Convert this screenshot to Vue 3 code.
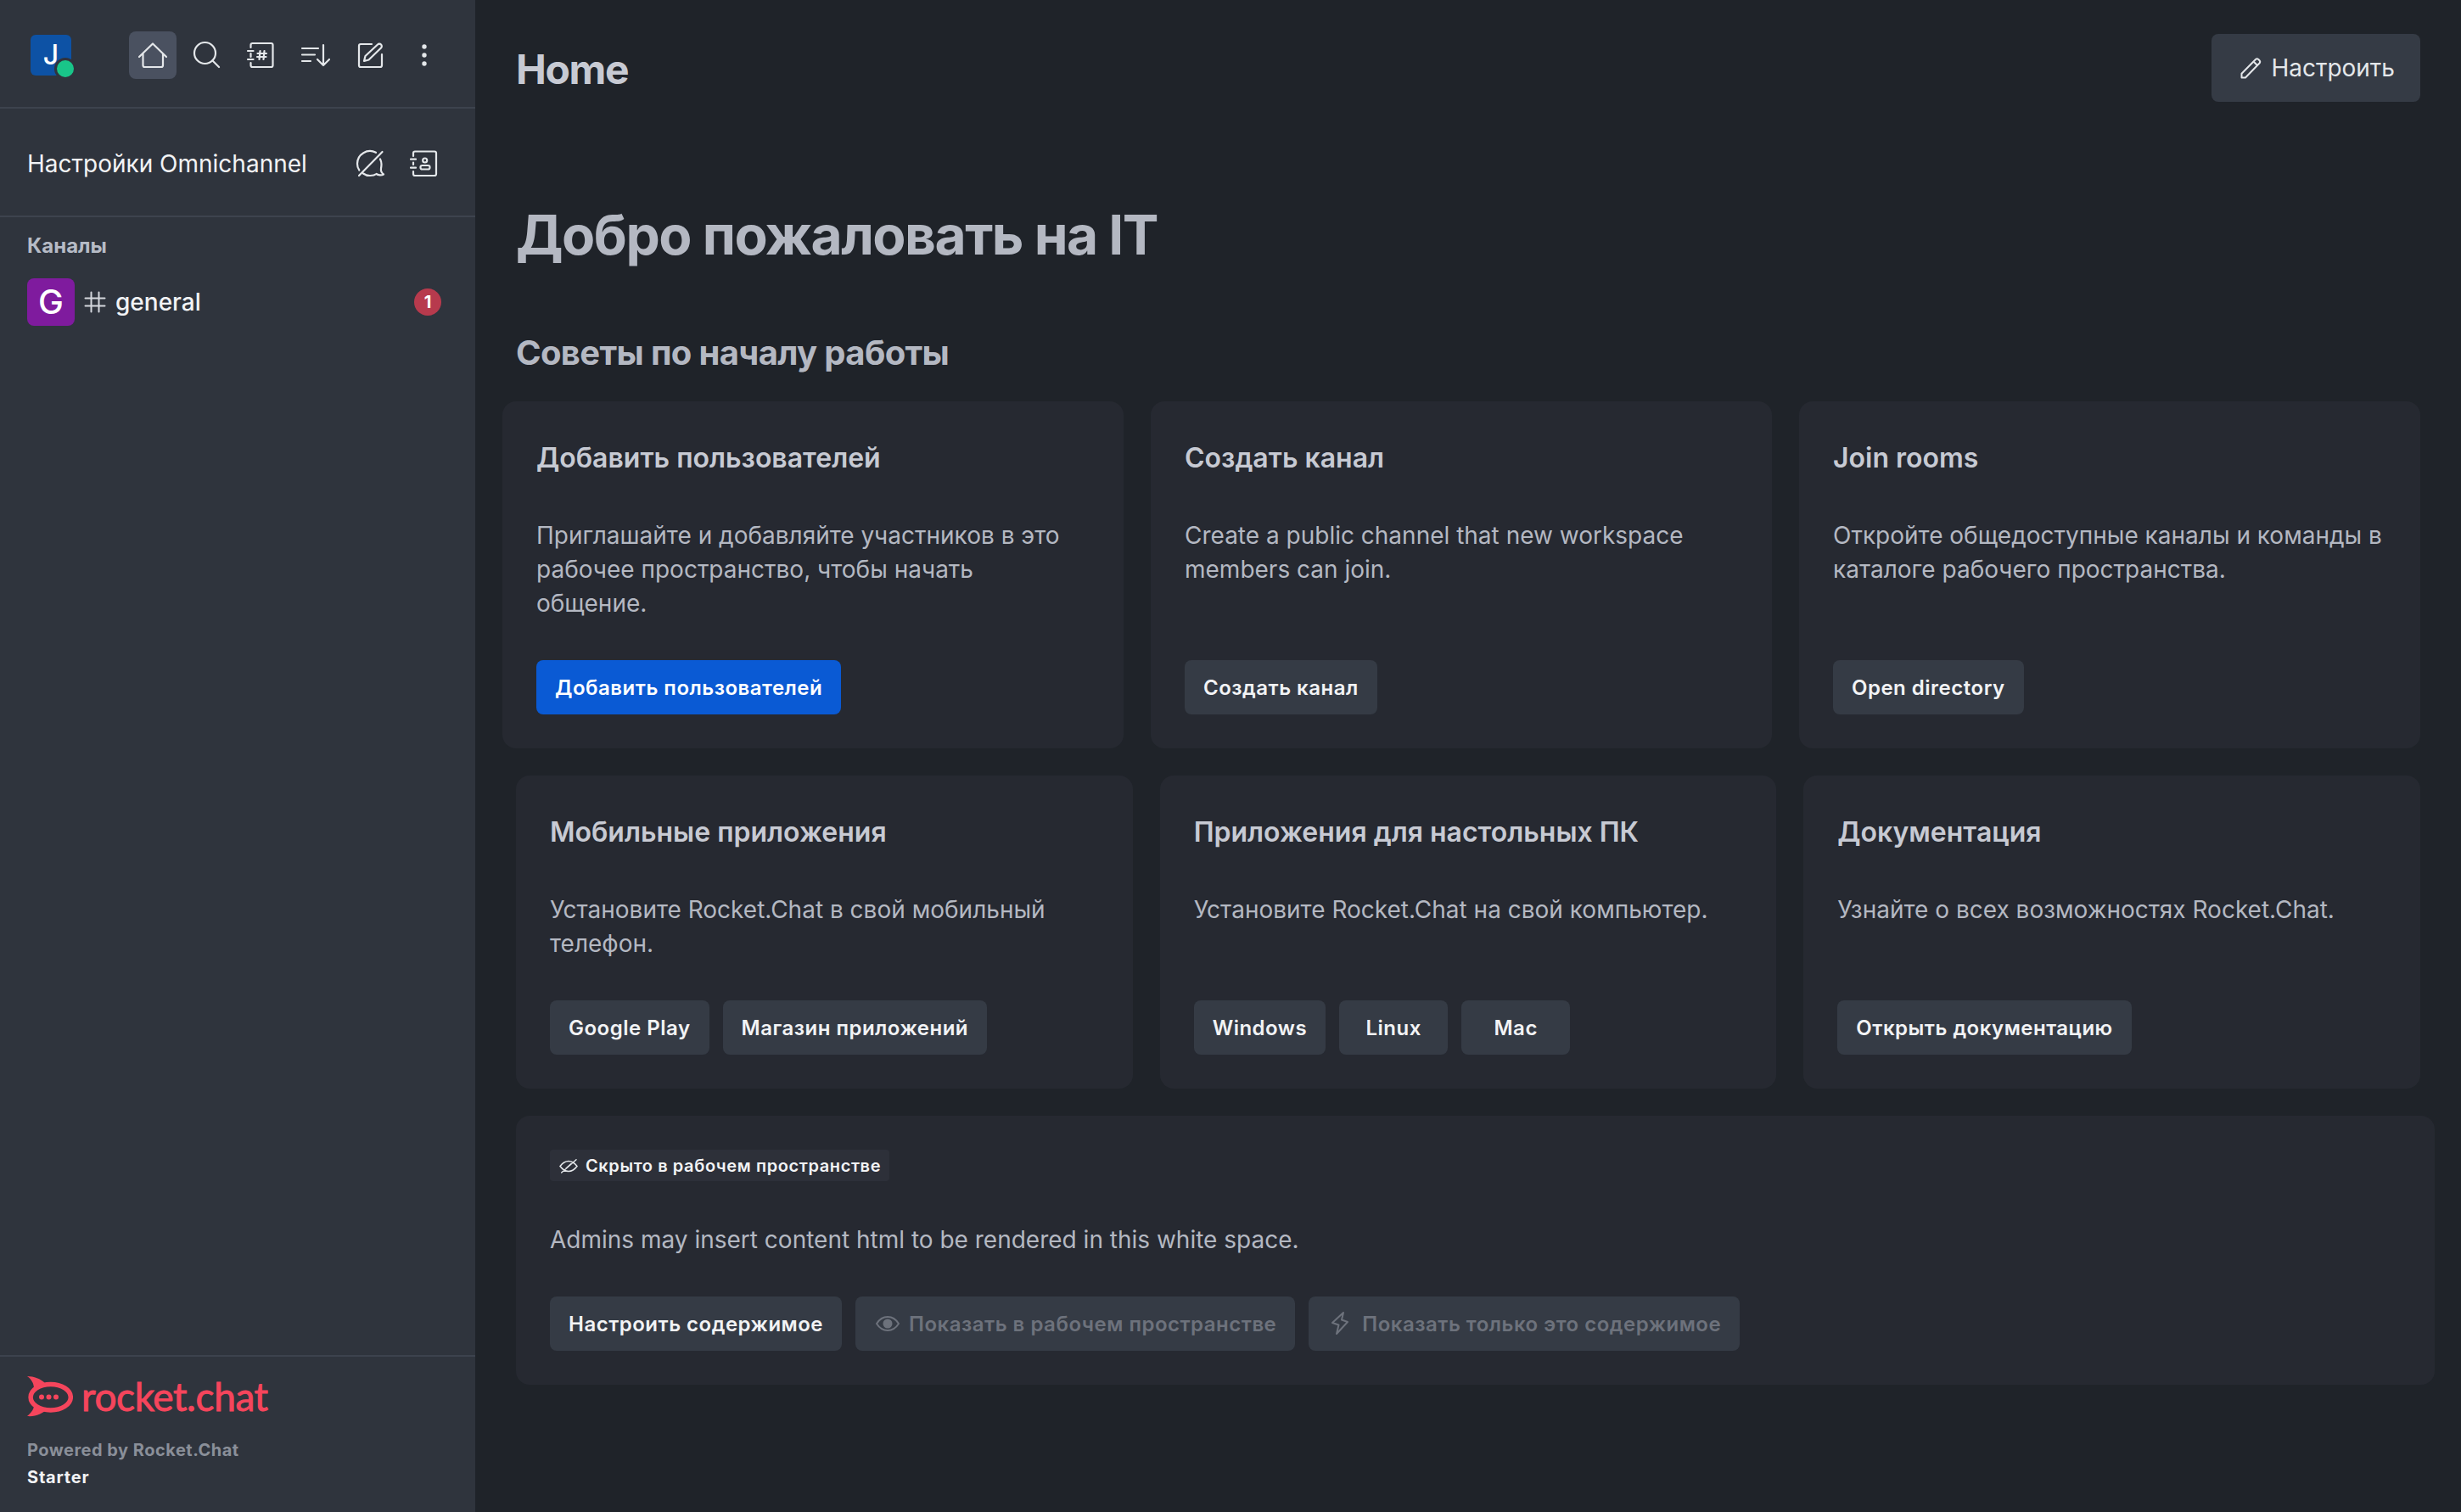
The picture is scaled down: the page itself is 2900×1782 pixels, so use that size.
<script setup>
const cardsTop = [
  { title: 'Добавить пользователей', text: 'Приглашайте и добавляйте участников в это рабочее пространство, чтобы начать общение.', buttons: [{ label: 'Добавить пользователей', primary: true }] },
  { title: 'Создать канал', text: 'Create a public channel that new workspace members can join.', buttons: [{ label: 'Создать канал' }] },
  { title: 'Join rooms', text: 'Откройте общедоступные каналы и команды в каталоге рабочего пространства.', buttons: [{ label: 'Open directory' }] },
]
const cardsBottom = [
  { title: 'Мобильные приложения', text: 'Установите Rocket.Chat в свой мобильный телефон.', buttons: [{ label: 'Google Play' }, { label: 'Магазин приложений' }] },
  { title: 'Приложения для настольных ПК', text: 'Установите Rocket.Chat на свой компьютер.', buttons: [{ label: 'Windows' }, { label: 'Linux' }, { label: 'Mac' }] },
  { title: 'Документация', text: 'Узнайте о всех возможностях Rocket.Chat.', buttons: [{ label: 'Открыть документацию' }] },
]
</script>

<template>
  <div class="app">
    <aside class="sidebar">
      <div class="side-head">
        <div class="user">
          <span class="user-letter">J</span>
          <span class="status"></span>
        </div>
        <nav class="nav">
          <span class="nav-btn active">
            <svg viewBox="0 0 40 40" class="ico"><path d="M4 22L20 6.500 36 22M8.500 18v14a2 2 0 0 0 2 2h19.500a2 2 0 0 0 2-2V18"/></svg>
          </span>
          <span class="nav-btn">
            <svg viewBox="0 0 40 40" class="ico"><circle cx="17.500" cy="17.500" r="12.500"/><path d="M26.500 26.500L34 34"/></svg>
          </span>
          <span class="nav-btn">
            <svg viewBox="0 0 40 40" class="ico"><path d="M7.500 11V8a2 2 0 0 1 2-2h22a2 2 0 0 1 2 2v24a2 2 0 0 1-2 2h-22a2 2 0 0 1-2-2v-3M7.500 18v4M4 15h6.500M4 25h6.500"/><path d="M18.500 15l-1 10M23.500 15l-1 10M15.500 18h10.500M15 22h10.500"/></svg>
          </span>
          <span class="nav-btn">
            <svg viewBox="0 0 40 40" class="ico"><path d="M4 12h19M4 19.500h15M4 27h10M29 8v24M22 25l7 7 7-7"/></svg>
          </span>
          <span class="nav-btn">
            <svg viewBox="0 0 40 40" class="ico"><path d="M22 7H9a2 2 0 0 0-2 2v23a2 2 0 0 0 2 2h23a2 2 0 0 0 2-2V19"/><path d="M13 27l1.500-6L29 7.500a2.800 2.800 0 0 1 4 4L18.500 25.500z"/></svg>
          </span>
          <span class="nav-btn">
            <svg viewBox="0 0 40 40" class="ico-fill"><circle cx="20" cy="10" r="2.700"/><circle cx="20" cy="20" r="2.700"/><circle cx="20" cy="30" r="2.700"/></svg>
          </span>
        </nav>
      </div>

      <div class="side-opts">
        <span class="opts-label">Настройки Omnichannel</span>
        <div class="opts-icons">
          <svg viewBox="0 0 40 40" class="ico"><path d="M28 6.800A15 15 0 0 0 6 20c0 3 .8 5.500 2.300 7.500M13 31.500c2 1.500 5 2.500 8 2.500 3 0 6-.8 7.500-2 2 1.500 6 2 8.500.5-2-1.500-3.500-4-3-7 .3-2 .5-3 .5-5 0-2-.5-4-1.500-6M8 34L35.500 6"/></svg>
          <svg viewBox="0 0 40 40" class="ico"><path d="M7 11V7.500a2 2 0 0 1 2-2h23a2 2 0 0 1 2 2V32a2 2 0 0 1-2 2H9a2 2 0 0 1-2-2v-3M7 18.500v2.500M4 14.700h6M4 24.700h6"/><circle cx="20.700" cy="16" r="2.500"/><rect x="15.500" y="22" width="11" height="4.500" rx="2"/></svg>
        </div>
      </div>

      <div class="side-title">Каналы</div>
      <div class="room">
        <span class="room-avatar">G</span>
        <svg viewBox="0 0 32 32" class="hash"><path d="M11.500 4.500v23M20.500 4.500v23M4.500 11.500h23M4.500 20.500h23"/></svg>
        <span class="room-name">general</span>
        <span class="badge">1</span>
      </div>

      <footer class="side-foot">
        <div class="logo">
          <svg viewBox="0 0 54 48" class="logo-mark">
            <ellipse cx="27.700" cy="24.700" rx="23.600" ry="15.300" class="logo-ring"/>
            <path d="M0 0c8 0 16 3 21 8L8 14C8 10 6 4 0 0zM8 32c1 6-3 11-8 15 10 1 18-3 23-8z" class="logo-solid"/>
            <circle cx="17" cy="24.500" r="3" class="logo-solid"/>
            <circle cx="25.500" cy="24.500" r="3" class="logo-solid"/>
            <circle cx="34" cy="24.500" r="3" class="logo-solid"/>
          </svg>
          <span class="logo-word">rocket.chat</span>
        </div>
        <div class="powered">Powered by Rocket.Chat</div>
        <div class="plan">Starter</div>
      </footer>
    </aside>

    <main class="main">
      <header class="top">
        <span class="page-name">Home</span>
        <button class="configure">
          <svg viewBox="0 0 32 32" class="ico-small"><path d="M5.500 27.500v-4.800L22 6a2.500 2.500 0 0 1 3.300 0l1.200 1.200a2.500 2.500 0 0 1 0 3.300L10 27.500zM19.500 8.500l4.500 4.500"/></svg>
          Настроить
        </button>
      </header>

      <h1 class="welcome">Добро пожаловать на IT</h1>
      <h2 class="tips">Советы по началу работы</h2>

      <section class="row row-first">
        <article v-for="c in cardsTop" :key="c.title" class="card">
          <h3 class="card-title">{{ c.title }}</h3>
          <p class="card-text">{{ c.text }}</p>
          <div class="actions">
            <button v-for="b in c.buttons" :key="b.label" class="btn" :class="{ primary: b.primary }">{{ b.label }}</button>
          </div>
        </article>
      </section>

      <section class="row row-second">
        <article v-for="c in cardsBottom" :key="c.title" class="card">
          <h3 class="card-title">{{ c.title }}</h3>
          <p class="card-text">{{ c.text }}</p>
          <div class="actions">
            <button v-for="b in c.buttons" :key="b.label" class="btn">{{ b.label }}</button>
          </div>
        </article>
      </section>

      <section class="custom">
        <span class="tag">
          <svg viewBox="0 0 24 24" class="tag-ico"><path d="M2 12.500c3-4 6-6 10-6s7 2 10 6c-3 4-6 6-10 6s-7-2-10-6zM9 15l6-5.500M3.700 20L21 4.700"/></svg>
          Скрыто в рабочем пространстве
        </span>
        <p class="custom-text">Admins may insert content html to be rendered in this white space.</p>
        <div class="actions">
          <button class="btn">Настроить содержимое</button>
          <button class="btn disabled">
            <svg viewBox="0 0 32 32" class="btn-ico"><path d="M3 16c3.500-5.500 8-8 13-8s9.500 2.500 13 8c-3.500 5.500-8 8-13 8s-9.500-2.500-13-8z"/><circle cx="16" cy="16" r="4.500" class="btn-ico-dot"/></svg>
            Показать в рабочем пространстве
          </button>
          <button class="btn disabled">
            <svg viewBox="0 0 32 32" class="btn-ico"><path d="M19 3L6 15l7.500 2.500L11 28l13-14-7-2.500z"/></svg>
            Показать только это содержимое
          </button>
        </div>
      </section>
    </main>
  </div>
</template>

<style scoped>
.app {
  display: flex;
  height: 1782px;
  overflow: hidden;
  font-family: Inter, "Noto Sans", sans-serif;
  background: #1f2329;
}
.sidebar {
  width: 560px;
  flex: none;
  display: flex;
  flex-direction: column;
  background: #2f343d;
  color: #e4e7ea;
}
.side-head {
  height: 128px;
  box-sizing: border-box;
  padding: 4px 0 0 36px;
  display: flex;
  align-items: center;
  gap: 68px;
  border-bottom: 2px solid #3d434e;
}
.user {
  position: relative;
  width: 48px;
  height: 48px;
  border-radius: 6px;
  background: #0d52a5;
  color: #fff;
  display: flex;
  align-items: center;
  justify-content: center;
}
.user-letter {
  font-size: 32px;
  font-weight: 500;
  line-height: 48px;
}
.status {
  position: absolute;
  left: 28px;
  top: 27px;
  width: 20px;
  height: 20px;
  border-radius: 50%;
  background: #19c589;
  border: 3px solid #2f343d;
}
.nav {
  display: flex;
  gap: 8px;
}
.nav-btn {
  width: 56px;
  height: 56px;
  border-radius: 8px;
  display: flex;
  align-items: center;
  justify-content: center;
}
.nav-btn.active {
  background: #4a5160;
}
.ico {
  width: 40px;
  height: 40px;
  fill: none;
  stroke: #e4e7ea;
  stroke-width: 2.200;
  stroke-linecap: round;
  stroke-linejoin: round;
}
.ico-fill {
  width: 40px;
  height: 40px;
  fill: #e4e7ea;
}
.side-opts {
  height: 128px;
  box-sizing: border-box;
  padding: 4px 40px 0 32px;
  display: flex;
  align-items: center;
  justify-content: space-between;
  border-bottom: 2px solid #3d434e;
}
.opts-label {
  font-size: 28px;
  line-height: 40px;
  color: #f2f3f5;
}
.opts-icons {
  display: flex;
  gap: 25px;
}
.side-title {
  margin-top: 18px;
  padding-left: 32px;
  font-size: 24px;
  line-height: 32px;
  font-weight: 700;
  color: #b6bbc6;
}
.room {
  margin-top: 22px;
  padding: 0 40px 0 32px;
  display: flex;
  align-items: center;
  gap: 8px;
}
.room-avatar {
  width: 56px;
  height: 56px;
  border-radius: 8px;
  background: #7f1b9e;
  color: #fff;
  font-size: 40px;
  font-weight: 500;
  line-height: 56px;
  text-align: center;
}
.hash {
  width: 32px;
  height: 32px;
  fill: none;
  stroke: #d5d8de;
  stroke-width: 2;
  stroke-linecap: round;
}
.room-name {
  flex: 1;
  font-size: 28px;
  line-height: 40px;
  font-weight: 500;
  color: #f2f3f5;
}
.badge {
  width: 32px;
  height: 32px;
  border-radius: 50%;
  background: #b73a4d;
  color: #fff;
  font-size: 20px;
  font-weight: 700;
  line-height: 32px;
  text-align: center;
}
.side-foot {
  margin-top: auto;
  height: 185px;
  box-sizing: border-box;
  padding: 23px 32px 0;
  border-top: 2px solid #3d434e;
}
.logo {
  display: flex;
  align-items: center;
  gap: 10px;
  height: 48px;
}
.logo-mark {
  width: 54px;
  height: 48px;
  flex: none;
}
.logo-ring {
  fill: none;
  stroke: #f5455c;
  stroke-width: 5.500;
}
.logo-solid {
  fill: #f5455c;
}
.logo-word {
  font-family: Lato, sans-serif;
  font-size: 46px;
  line-height: 44px;
  font-weight: 400;
  color: #f5455c;
  -webkit-text-stroke: 0.9px #f5455c;
  letter-spacing: -0.4px;
}
.powered {
  margin-top: 23px;
  font-size: 20px;
  line-height: 32px;
  font-weight: 700;
  letter-spacing: 0.5px;
  color: #8a8f99;
}
.plan {
  font-size: 20px;
  line-height: 32px;
  font-weight: 700;
  letter-spacing: 0.8px;
  color: #f2f3f5;
}
.main {
  flex: 1;
  min-width: 0;
  box-sizing: border-box;
  padding: 40px 48px 0;
}
.top {
  height: 80px;
  display: flex;
  align-items: center;
  justify-content: space-between;
}
.page-name {
  padding-top: 3px;
  font-size: 48px;
  line-height: 77px;
  font-weight: 700;
  letter-spacing: -1.4px;
  color: #c7cad3;
}
.configure {
  height: 80px;
  box-sizing: border-box;
  padding: 0 30px;
  display: flex;
  align-items: center;
  gap: 8px;
  border: 0;
  border-radius: 8px;
  background: #353b45;
  color: #e4e7ea;
  font-family: inherit;
  font-size: 28px;
}
.ico-small {
  width: 32px;
  height: 32px;
  fill: none;
  stroke: #e4e7ea;
  stroke-width: 2;
  stroke-linejoin: round;
}
.welcome {
  margin: 117px 0 0;
  font-size: 64px;
  line-height: 80px;
  font-weight: 700;
  letter-spacing: -1.5px;
  color: #b4b8c2;
}
.tips {
  margin: 71px 0 0;
  font-size: 40px;
  line-height: 56px;
  font-weight: 700;
  letter-spacing: -0.65px;
  color: #b4b8c2;
}
.row {
  display: flex;
  gap: 32px;
}
.row-first {
  margin: 29px 0 0 -16px;
}
.row-second {
  margin-top: 32px;
}
.card {
  flex: 1 1 0;
  min-width: 0;
  box-sizing: border-box;
  padding: 40px;
  display: flex;
  flex-direction: column;
  border-radius: 16px;
  background: #262931;
}
.card-title {
  margin: 0;
  font-size: 32px;
  line-height: 54px;
  font-weight: 600;
  color: #c7cad3;
}
.card-text {
  margin: 44px 0 47px;
  font-size: 28px;
  line-height: 40px;
  color: #b4b8c2;
}
.row-first .card-text {
  min-height: 120px;
}
.actions {
  margin-top: auto;
  display: flex;
  gap: 16px;
}
.btn {
  height: 64px;
  min-width: 128px;
  box-sizing: border-box;
  padding: 0 22px;
  display: flex;
  align-items: center;
  justify-content: center;
  gap: 9px;
  border: 0;
  border-radius: 8px;
  background: #353b45;
  color: #f2f3f5;
  font-family: inherit;
  font-size: 24px;
  font-weight: 600;
  letter-spacing: 0.5px;
  white-space: nowrap;
}
.btn.primary {
  background: #0a5ad4;
  color: #fff;
}
.btn.disabled {
  color: #6d727c;
}
.btn-ico {
  width: 32px;
  height: 32px;
  fill: none;
  stroke: #6d727c;
  stroke-width: 2;
  stroke-linejoin: round;
}
.btn-ico-dot {
  fill: #6d727c;
}
.custom {
  margin: 32px -17px 0 0;
  padding: 40px;
  border-radius: 16px;
  background: #262931;
}
.tag {
  display: inline-flex;
  align-items: center;
  gap: 8px;
  height: 37px;
  padding: 0 10px;
  border-radius: 4px;
  background: #2d3039;
  color: #f2f3f5;
  font-size: 20px;
  font-weight: 600;
  letter-spacing: 0.6px;
}
.tag-ico {
  width: 24px;
  height: 24px;
  fill: none;
  stroke: #e4e7ea;
  stroke-width: 1.500;
  stroke-linecap: round;
}
.custom-text {
  margin: 49px 0 47px;
  font-size: 28px;
  line-height: 40px;
  color: #b4b8c2;
}
</style>

<style>
html, body {
  margin: 0;
  background: #1f2329;
}
</style>
